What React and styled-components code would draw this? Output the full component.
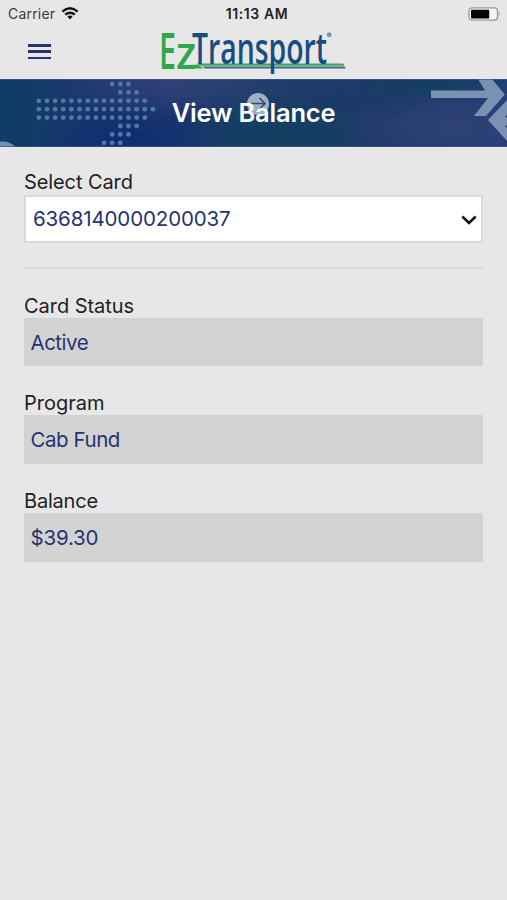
import React from "react";
import styled, { createGlobalStyle } from "styled-components";

const GlobalStyle = createGlobalStyle`
  * { box-sizing: border-box; }
  body { margin: 0; background: #e7e7e7; font-family: Inter, "Liberation Sans", sans-serif; }
`;

const Screen = styled.div`
  display: flex;
  flex-direction: column;
  min-height: 900px;
  background: #e7e7e7;
`;

const StatusBar = styled.div`
  display: grid;
  grid-template-columns: 1fr auto 1fr;
  align-items: center;
  height: 27px;
  padding: 0 6px 0 8px;
  color: #222;
`;

const Carrier = styled.div`
  display: flex;
  align-items: center;
  gap: 6px;
  color: #3a3a3a;
  font-size: 14px;
  letter-spacing: 0.2px;
`;

const Clock = styled.div`
  font-weight: 600;
  font-size: 14px;
  line-height: 16px;
  letter-spacing: 0.6px;
  padding-left: 5px;
`;

const Battery = styled.svg`
  justify-self: end;
`;

const Header = styled.header`
  display: flex;
  align-items: flex-start;
  height: 52px;
  padding-left: 28px;
`;

const MenuButton = styled.button`
  display: flex;
  flex-direction: column;
  gap: 3.5px;
  width: 23px;
  margin: 17px 109px 0 0;
  padding: 0;
  border: 0;
  background: none;
`;

const MenuLine = styled.span`
  height: 2.8px;
  background: #27336f;
`;

const LogoMark = styled.svg`
  overflow: visible;
`;

const Banner = styled.div`
  position: relative;
  display: flex;
  align-items: center;
  justify-content: center;
  height: 68px;
`;

const BannerArt = styled.svg`
  position: absolute;
  inset: 0;
`;

const Title = styled.h1`
  position: relative;
  margin: 0;
  color: #fff;
  font-size: 25.5px;
  font-weight: 600;
  line-height: 30px;
  letter-spacing: -0.2px;
`;

const Form = styled.main`
  display: flex;
  flex-direction: column;
  padding: 22px 24px 0;
`;

const Field = styled.div`
  display: flex;
  flex-direction: column;
  margin-bottom: 24px;
`;

const Label = styled.label`
  height: ${(p) => p.$height ?? 25}px;
  line-height: 26px;
  color: #222;
  font-size: 20px;
  letter-spacing: ${(p) => p.$tracking ?? 0}px;
`;

const Value = styled.div`
  height: 48.8px;
  padding-left: 6.5px;
  background: #d3d3d3;
  color: #27336f;
  font-size: 20.5px;
  line-height: 49px;
  letter-spacing: ${(p) => p.$tracking ?? 0}px;
`;

const Select = styled.div`
  display: flex;
  align-items: center;
  justify-content: space-between;
  height: 48px;
  padding: 0 4px 1px 7px;
  border: 2px solid #dadada;
  background: #fff;
  color: #27336f;
  font-size: 20.5px;
  letter-spacing: ${(p) => p.$tracking ?? 0}px;
`;

const Divider = styled.hr`
  width: 100%;
  height: 2px;
  margin: 0 0 23.5px;
  border: 0;
  background: #dbdbdb;
`;

function WifiIcon() {
  return (
    <svg width="18" height="14" viewBox="0 0 18 14" fill="none" stroke="#111" strokeWidth="2.4">
      <path d="M1.3 4.6Q9-2 16.7 4.6" />
      <path d="M4.2 7.7Q9 3.7 13.8 7.7" />
      <path d="M6.4 9.6Q9 7.6 11.6 9.6L9 12.4Z" fill="#111" stroke="none" />
    </svg>
  );
}

function Logo() {
  return (
    <LogoMark width="188" height="46" viewBox="160 27 188 46" fontFamily='"Open Sans", sans-serif'>
      <path d="M196 63.6H343L344.5 65.8H200Z" fill="#35a956" />
      <path d="M202 66.5H344.5L346 68.6H205Z" fill="#416494" />
      <path d="M190 64.8H198L203.5 68.6H190Z" fill="#30a64d" />
      <text x="159" y="68.5" fontSize="51" fontWeight="600" fill="#30a64d" textLength="17" lengthAdjust="spacingAndGlyphs">E</text>
      <text x="176" y="68.5" fontSize="45" fontWeight="600" fill="#30a64d" textLength="20.4" lengthAdjust="spacingAndGlyphs">z</text>
      <text x="192" y="63.8" fontSize="43.5" fontWeight="600" fill="#174e82" textLength="135" lengthAdjust="spacingAndGlyphs">Transport</text>
      <circle cx="329.2" cy="34.8" r="2" fill="#7f9cbc" stroke="#416494" strokeWidth=".6" />
    </LogoMark>
  );
}

/* Each row of the dotted arrow as [first column, number of dots]. */
const DOT_ROWS = [
  [9, 3], [10, 3], [0, 14], [0, 15], [0, 14], [10, 3], [9, 3], [8, 3],
];

function BannerArtwork() {
  return (
    <BannerArt width="507" height="68" viewBox="0 0 507 68">
      <defs>
        <linearGradient id="base">
          <stop offset="0" stopColor="#0f3c64" />
          <stop offset=".13" stopColor="#16386c" />
          <stop offset=".3" stopColor="#1a3570" />
          <stop offset=".5" stopColor="#1b3d68" />
          <stop offset=".72" stopColor="#1d3a69" />
          <stop offset="1" stopColor="#233f76" />
        </linearGradient>
        <radialGradient id="teal">
          <stop offset="0" stopColor="#123f60" />
          <stop offset="1" stopColor="#123f60" stopOpacity="0" />
        </radialGradient>
        <radialGradient id="blue">
          <stop offset="0" stopColor="#0f2d70" />
          <stop offset="1" stopColor="#0f2d70" stopOpacity="0" />
        </radialGradient>
        <radialGradient id="violet">
          <stop offset="0" stopColor="#304177" />
          <stop offset="1" stopColor="#304177" stopOpacity="0" />
        </radialGradient>
      </defs>
      <rect width="507" height="68" fill="url(#base)" />
      <ellipse cx="280" cy="54" rx="105" ry="42" fill="url(#teal)" />
      <ellipse cx="435" cy="0" rx="90" ry="28" fill="url(#teal)" />
      <ellipse cx="130" cy="62" rx="90" ry="40" fill="url(#blue)" />
      <ellipse cx="175" cy="6" rx="130" ry="32" fill="url(#violet)" />
      <ellipse cx="455" cy="48" rx="120" ry="36" fill="url(#violet)" />
      <path d="M318 16H390V5L421 25L382 44V30H318Z" fill="#15335f" opacity=".12" />
      <g fill="#5279a3">
        {DOT_ROWS.map(([start, count], row) =>
          Array.from({ length: count }, (_, i) => (
            <circle key={`${row}-${i}`} cx={38.8 + (start + i) * 8.15} cy={5 + row * 8.4} r="2.4" />
          ))
        )}
      </g>
      <circle cx="3" cy="79" r="16.5" fill="#7292ae" />
      <g fill="#7b91b2">
        <path d="M431 11.5H485L478 0H492L504.8 15.5L486 37H474L488 19H431Z" />
        <path d="M488 41L507 21V36L505 37.5L507 39V46L505 47.5L507 49V62Z" />
      </g>
      <circle cx="258" cy="25" r="11" fill="#9fb0c1" />
      <path d="M251 24.5H264.5M259.5 19L265 24.5L259.5 30" fill="none" stroke="#294d76" strokeWidth="1.6" />
      <path d="M0 .5H507M0 67.5H507" stroke="#3d587f" opacity=".7" />
    </BannerArt>
  );
}

export default function App() {
  return (
    <Screen>
      <GlobalStyle />
      <StatusBar>
        <Carrier>Carrier <WifiIcon /></Carrier>
        <Clock>11:13 AM</Clock>
        <Battery width="33" height="14" viewBox="0 0 33 14">
          <rect x="1" y=".8" width="28.5" height="12.4" rx="3" fill="#f5f5f5" stroke="#999" strokeWidth="1.3" />
          <rect x="3" y="2.7" width="18.2" height="8.7" rx="1" fill="#050505" />
          <path d="M30.8 5Q33 7 30.8 9Z" fill="#999" />
        </Battery>
      </StatusBar>
      <Header>
        <MenuButton aria-label="Menu"><MenuLine /><MenuLine /><MenuLine /></MenuButton>
        <Logo />
      </Header>
      <Banner>
        <BannerArtwork />
        <Title>View Balance</Title>
      </Banner>
      <Form>
        <Field>
          <Label $height={26} $tracking={-0.1}>Select Card</Label>
          <Select $tracking={-0.13}>
            6368140000200037
            <svg width="16" height="12" viewBox="0 0 16 12" fill="none" stroke="#151515" strokeWidth="2.6">
              <path d="M1.3 3.5L8 10L14.7 3.5" />
            </svg>
          </Select>
        </Field>
        <Divider />
        <Field>
          <Label $tracking={-0.05}>Card Status</Label>
          <Value $tracking={-0.5}>Active</Value>
        </Field>
        <Field>
          <Label>Program</Label>
          <Value $tracking={-0.45}>Cab Fund</Value>
        </Field>
        <Field>
          <Label $tracking={-0.2}>Balance</Label>
          <Value $tracking={-0.2}>$39.30</Value>
        </Field>
      </Form>
    </Screen>
  );
}
